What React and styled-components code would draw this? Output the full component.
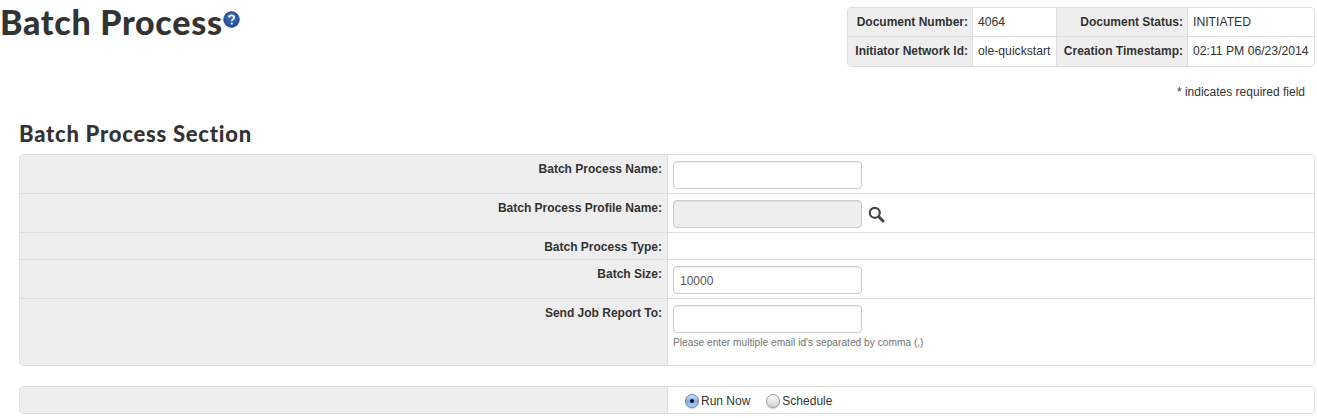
import styled, { createGlobalStyle } from "styled-components";

const GlobalStyle = createGlobalStyle`
  html, body {
    margin: 0;
    padding: 0;
    background: #fff;
  }
  body {
    font-family: "Liberation Sans", Arial, sans-serif;
    font-size: 12px;
    color: #333;
  }
`;

function HelpIcon() {
  return (
    <svg width="17" height="17" viewBox="0 0 17 17">
      <defs>
        <radialGradient id="help-fill" cx="50%" cy="35%" r="70%">
          <stop offset="0%" stopColor="#3f74c4" />
          <stop offset="100%" stopColor="#1c4796" />
        </radialGradient>
      </defs>
      <circle cx="8.5" cy="8.5" r="7.7" fill="url(#help-fill)" stroke="#1b3a7c" strokeWidth="1" />
      <path
        d="M6 6.6c0-1.5 1.1-2.3 2.5-2.3s2.6.8 2.6 2.2c0 1.9-2.3 1.9-2.3 3.6"
        fill="none"
        stroke="#fff"
        strokeWidth="1.8"
      />
      <circle cx="8.8" cy="12.6" r="1.1" fill="#fff" />
    </svg>
  );
}

function SearchIcon() {
  return (
    <svg width="17" height="17" viewBox="0 0 17 17">
      <circle cx="6.8" cy="6.8" r="5" fill="none" stroke="#444" strokeWidth="2.2" />
      <path d="M10.8 10.8L15 15" stroke="#444" strokeWidth="3" strokeLinecap="round" />
    </svg>
  );
}

const metaRows = [
  ["Document Number:", "4064", "Document Status:", "INITIATED"],
  ["Initiator Network Id:", "ole-quickstart", "Creation Timestamp:", "02:11 PM 06/23/2014"],
];

export default function App() {
  return (
    <Page>
      <GlobalStyle />
      <Header>
        <Title>
          Batch Process
          <HelpBadge>
            <HelpIcon />
          </HelpBadge>
        </Title>
        <MetaTable>
          {metaRows.map((row, r) =>
            row.map((cell, c) =>
              c % 2 === 0 ? (
                <MetaLabel key={`${r}-${c}`} $last={r === 1}>
                  {cell}
                </MetaLabel>
              ) : (
                <MetaValue key={`${r}-${c}`} $last={r === 1} $end={c === 3}>
                  {cell}
                </MetaValue>
              )
            )
          )}
        </MetaTable>
      </Header>

      <RequiredNote>* indicates required field</RequiredNote>

      <Section>
        <SectionTitle>Batch Process Section</SectionTitle>
        <FormTable>
          <Row $height={39}>
            <Label>Batch Process Name:</Label>
            <Value>
              <Input />
            </Value>
          </Row>
          <Row $height={39}>
            <Label>Batch Process Profile Name:</Label>
            <Value>
              <Input $disabled disabled />
              <LookupButton>
                <SearchIcon />
              </LookupButton>
            </Value>
          </Row>
          <Row $height={27}>
            <Label>Batch Process Type:</Label>
            <Value />
          </Row>
          <Row $height={39}>
            <Label>Batch Size:</Label>
            <Value>
              <Input defaultValue="10000" />
            </Value>
          </Row>
          <Row $height={66} $last>
            <Label>Send Job Report To:</Label>
            <Value $stacked>
              <Input />
              <Hint>Please enter multiple email id's separated by comma (,)</Hint>
            </Value>
          </Row>
        </FormTable>

        <RadioTable>
          <Row $height={26} $last>
            <Label />
            <RadioCell>
              <RadioOption>
                <Radio name="run" defaultChecked />
                Run Now
              </RadioOption>
              <RadioOption>
                <Radio name="run" />
                Schedule
              </RadioOption>
            </RadioCell>
          </Row>
        </RadioTable>
      </Section>
    </Page>
  );
}

const Page = styled.div`
  width: 1317px;
  height: 418px;
  overflow: hidden;
`;

const Header = styled.div`
  display: flex;
  justify-content: space-between;
  align-items: flex-start;
  padding-right: 2px;
`;

const Title = styled.h1`
  display: flex;
  align-items: flex-start;
  margin: 3px 0 0;
  font-family: Lato, "Liberation Sans", sans-serif;
  font-size: 34px;
  font-weight: 900;
  line-height: 38px;
  letter-spacing: 0.7px;
  color: #333;
`;

const HelpBadge = styled.span`
  display: block;
  margin-top: 8px;
  svg {
    display: block;
  }
`;

const MetaTable = styled.div`
  display: grid;
  grid-template-columns: 125px 84px 131px 126px;
  grid-template-rows: 29px 29px;
  margin-top: 7px;
  border: 1px solid #ddd;
  border-radius: 4px;
  overflow: hidden;
`;

const MetaLabel = styled.div`
  display: flex;
  align-items: center;
  justify-content: flex-end;
  padding: 0 4px 1px 0;
  background: #eee;
  font-size: 12px;
  font-weight: 700;
  white-space: nowrap;
  border-right: 1px solid #ddd;
  border-bottom: ${(p) => (p.$last ? "none" : "1px solid #ddd")};
`;

const MetaValue = styled.div`
  display: flex;
  align-items: center;
  padding: 0 0 1px 5px;
  font-size: 12.2px;
  white-space: nowrap;
  border-right: ${(p) => (p.$end ? "none" : "1px solid #ddd")};
  border-bottom: ${(p) => (p.$last ? "none" : "1px solid #ddd")};
`;

const RequiredNote = styled.div`
  margin-top: 18px;
  padding-right: 12px;
  height: 15px;
  line-height: 15px;
  font-size: 12px;
  text-align: right;
`;

const Section = styled.div`
  margin: 0 2px 0 19px;
`;

const SectionTitle = styled.h2`
  margin: 21px 0 7px;
  font-family: Lato, "Liberation Sans", sans-serif;
  font-size: 22px;
  font-weight: 900;
  line-height: 26px;
  letter-spacing: 0.75px;
  color: #333;
`;

const FormTable = styled.div`
  border: 1px solid #ddd;
  border-radius: 4px;
  overflow: hidden;
`;

const RadioTable = styled(FormTable)`
  margin-top: 20px;
`;

const Row = styled.div`
  display: grid;
  grid-template-columns: 648px 1fr;
  height: ${(p) => p.$height}px;
  box-sizing: border-box;
  border-bottom: ${(p) => (p.$last ? "none" : "1px solid #ddd")};
`;

const Label = styled.div`
  padding: 7px 5px 0 0;
  background: #eee;
  border-right: 1px solid #ddd;
  font-size: 12px;
  font-weight: 700;
  line-height: 15px;
  text-align: right;
`;

const Value = styled.div`
  display: flex;
  flex-direction: ${(p) => (p.$stacked ? "column" : "row")};
  align-items: flex-start;
  padding: 6px 0 0 5px;
`;

const Input = styled.input`
  box-sizing: border-box;
  flex: none;
  width: 189px;
  height: 28px;
  padding: 2px 6px 0;
  border: 1px solid #ccc;
  border-radius: 4px;
  background: ${(p) => (p.$disabled ? "#eee" : "#fff")};
  box-shadow: inset 0 1px 1px rgba(0, 0, 0, 0.075);
  font-family: "Liberation Sans", Arial, sans-serif;
  font-size: 12px;
  color: #555;
  outline: none;
`;

const LookupButton = styled.span`
  display: block;
  margin: 6px 0 0 6px;
  svg {
    display: block;
  }
`;

const Hint = styled.div`
  margin-top: 4px;
  font-size: 10.2px;
  line-height: 12px;
  color: #737373;
`;

const RadioCell = styled.div`
  display: flex;
  align-items: center;
  gap: 16px;
  padding: 1px 0 0 17px;
`;

const RadioOption = styled.label`
  display: flex;
  align-items: center;
  font-size: 12px;
`;

const Radio = styled.input.attrs({ type: "radio" })`
  appearance: none;
  box-sizing: border-box;
  display: grid;
  place-items: center;
  width: 14px;
  height: 14px;
  margin: 1px 2px 0 0;
  border: 1px solid #9a9a9a;
  border-radius: 50%;
  background: linear-gradient(#fdfdfd, #d4d4d4);
  box-shadow: 0 1px 1px rgba(0, 0, 0, 0.2);

  &:checked {
    border-color: #6f7f9e;
    background: linear-gradient(#cfe2f8, #78aeee 55%, #b5d5f8);
  }

  &:checked::after {
    content: "";
    width: 4px;
    height: 4px;
    border-radius: 50%;
    background: #111;
  }
`;
